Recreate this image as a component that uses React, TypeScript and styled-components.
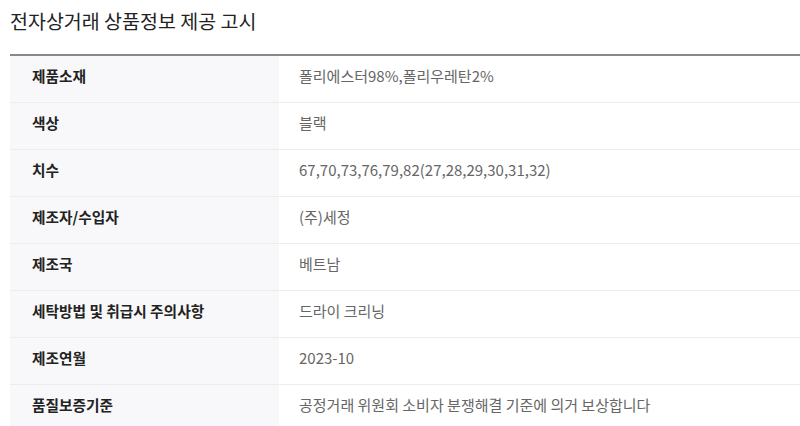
import React from "react";
import styled, { createGlobalStyle } from "styled-components";

const GlobalStyle = createGlobalStyle`
  html, body {
    margin: 0;
    padding: 0;
    background: #fff;
  }
  body {
    font-family: "Noto Sans CJK KR", "Noto Sans", sans-serif;
  }
`;

const Wrap = styled.section`
  padding: 0 0 0 10px;
`;

const Title = styled.h2`
  margin: 0;
  padding: 7px 0 0 0;
  height: 54px;
  box-sizing: border-box;
  font-size: 19.5px;
  font-weight: 400;
  line-height: 28px;
  color: #222;
`;

const Table = styled.table`
  width: 100%;
  border-collapse: collapse;
  border-top: 2px solid #888;
`;

const Row = styled.tr`
  border-bottom: 1px solid #ececec;
`;

const Head = styled.th`
  width: 269px;
  height: 47px;
  padding: 0 0 6px 22px;
  box-sizing: border-box;
  background: #f8f8fa;
  text-align: left;
  font-size: 14.7px;
  font-weight: 700;
  color: #222;
`;

const Cell = styled.td`
  height: 47px;
  padding: 0 0 6px 20px;
  box-sizing: border-box;
  font-size: 15px;
  font-weight: 400;
  color: #666;
`;

const rows: [string, string][] = [
  ["제품소재", "폴리에스터98%,폴리우레탄2%"],
  ["색상", "블랙"],
  ["치수", "67,70,73,76,79,82(27,28,29,30,31,32)"],
  ["제조자/수입자", "(주)세정"],
  ["제조국", "베트남"],
  ["세탁방법 및 취급시 주의사항", "드라이 크리닝"],
  ["제조연월", "2023-10"],
  ["품질보증기준", "공정거래 위원회 소비자 분쟁해결 기준에 의거 보상합니다"],
];

function App(): React.ReactElement {
  return (
    <Wrap>
      <GlobalStyle />
      <Title>전자상거래 상품정보 제공 고시</Title>
      <Table>
        <tbody>
          {rows.map(([label, value]) => (
            <Row key={label}>
              <Head>{label}</Head>
              <Cell>{value}</Cell>
            </Row>
          ))}
        </tbody>
      </Table>
    </Wrap>
  );
}

export default App;
